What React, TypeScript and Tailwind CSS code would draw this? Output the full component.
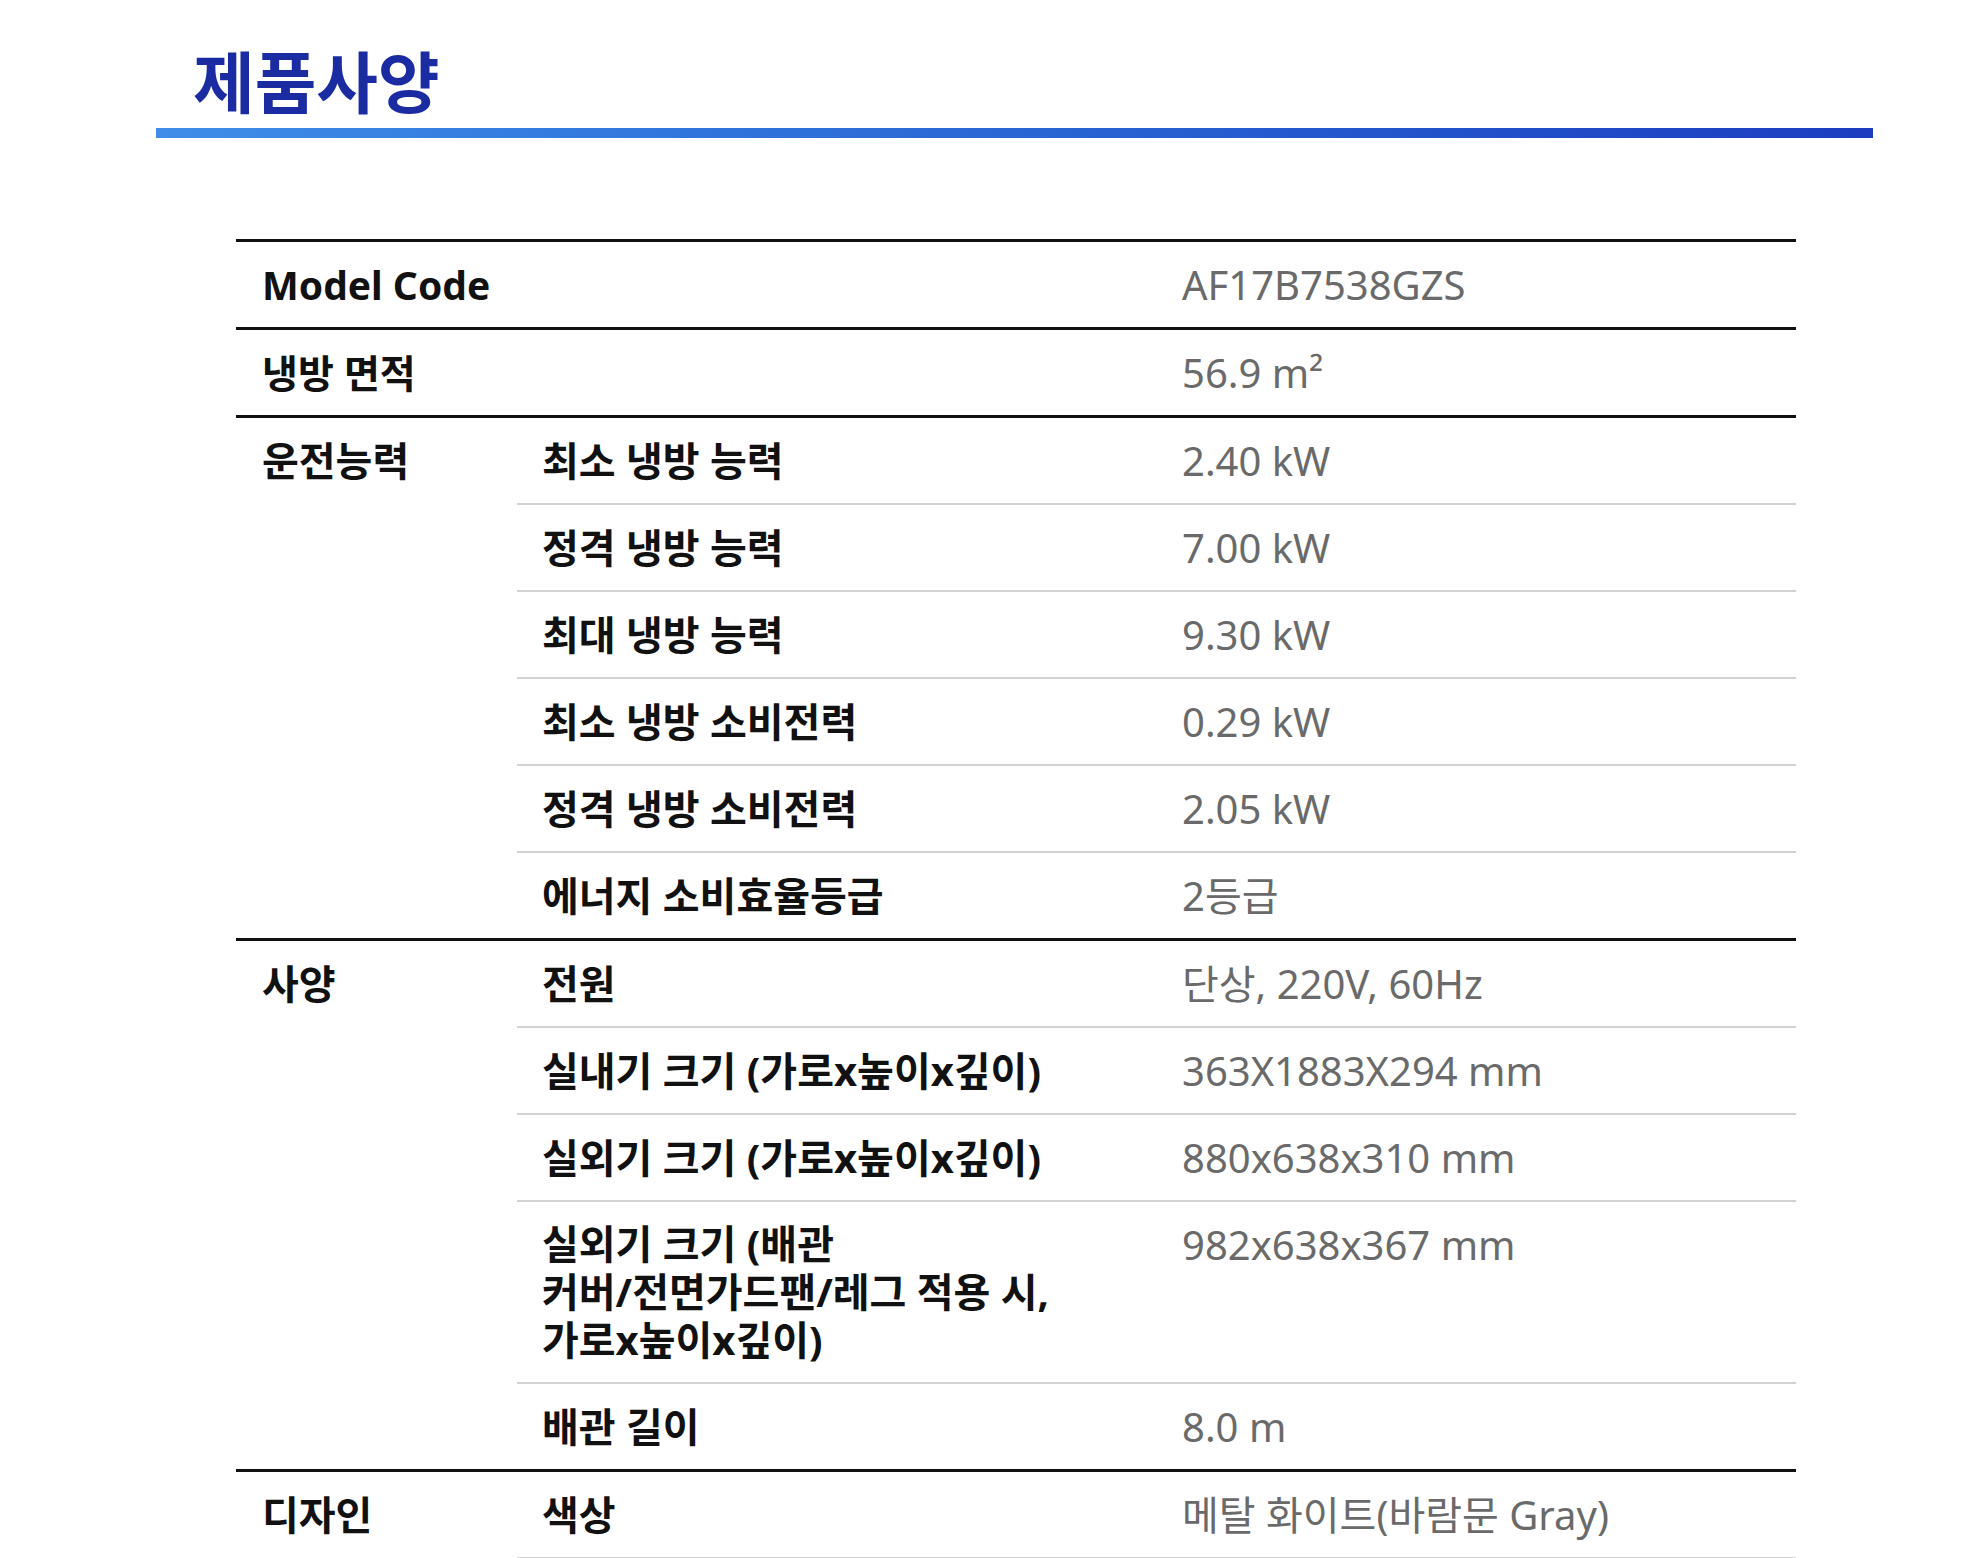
type Item = { label: React.ReactNode; value: React.ReactNode; multi?: boolean };

type Group = { title: string; items: Item[]; last?: boolean };

const groups: Group[] = [
  {
    title: "운전능력",
    items: [
      { label: "최소 냉방 능력", value: "2.40 kW" },
      { label: "정격 냉방 능력", value: "7.00 kW" },
      { label: "최대 냉방 능력", value: "9.30 kW" },
      { label: "최소 냉방 소비전력", value: "0.29 kW" },
      { label: "정격 냉방 소비전력", value: "2.05 kW" },
      { label: "에너지 소비효율등급", value: "2등급" },
    ],
  },
  {
    title: "사양",
    items: [
      { label: "전원", value: "단상, 220V, 60Hz" },
      { label: "실내기 크기 (가로x높이x깊이)", value: "363X1883X294 mm" },
      { label: "실외기 크기 (가로x높이x깊이)", value: "880x638x310 mm" },
      {
        label: (
          <>
            실외기 크기 (배관
            <br />
            커버/전면가드팬/레그 적용 시,
            <br />
            가로x높이x깊이)
          </>
        ),
        value: "982x638x367 mm",
        multi: true,
      },
      { label: "배관 길이", value: "8.0 m" },
    ],
  },
  {
    title: "디자인",
    items: [{ label: "색상", value: "메탈 화이트(바람문 Gray)" }],
    last: true,
  },
];

const font = "font-['Noto_Sans','Noto_Sans_CJK_KR',sans-serif]";

function SingleRow({ label, value }: Item) {
  return (
    <div className="flex border-b-[3px] border-[#111]">
      <div className="w-[920px] pl-[26px] py-[18px] text-[39px] leading-[49px] font-bold text-[#111]">
        {label}
      </div>
      <div className="flex-1 pl-[26px] py-[18px] text-[40px] leading-[49px] text-[#6a6a6a]">
        {value}
      </div>
    </div>
  );
}

function GroupRows({ title, items, last }: Group) {
  return (
    <div className={`flex ${last ? "" : "border-b-[3px] border-[#111]"}`}>
      <div className="w-[281px] shrink-0 pl-[26px] pt-[18px] text-[40px] leading-[49px] font-bold text-[#111]">
        {title}
      </div>
      <div className="flex-1">
        {items.map((it, i) => (
          <div
            key={i}
            className={`flex ${
              i < items.length - 1 || last ? "border-b-2 border-[#d2d2d2]" : ""
            }`}
          >
            <div
              className={`w-[639px] shrink-0 pl-[25px] py-[18px] text-[40px] font-bold text-[#111] ${
                it.multi ? "leading-[48px]" : "leading-[49px]"
              }`}
            >
              {it.label}
            </div>
            <div className="flex-1 pl-[26px] py-[18px] text-[40px] leading-[49px] text-[#6a6a6a]">
              {it.value}
            </div>
          </div>
        ))}
      </div>
    </div>
  );
}

export default function App() {
  return (
    <div className={`w-[1966px] h-[1558px] overflow-hidden bg-white ${font}`}>
      <div className="pl-[193px] pt-[45px]">
        <h1 className="text-[67px] leading-[67px] font-bold text-[#1b2ca3] font-['Noto_Sans_CJK_KR',sans-serif]">
          제품사양
        </h1>
      </div>
      <div className="ml-[156px] mt-[16px] w-[1717px] h-[10px] bg-gradient-to-r from-[#3f8de8] to-[#1d3cc0]" />
      <div className="ml-[236px] mt-[101px] w-[1560px] border-t-[3px] border-[#111]">
        <SingleRow label="Model Code" value="AF17B7538GZS" />
        <SingleRow label="냉방 면적" value="56.9 m²" />
        {groups.map((g) => (
          <GroupRows key={g.title} {...g} />
        ))}
      </div>
    </div>
  );
}
